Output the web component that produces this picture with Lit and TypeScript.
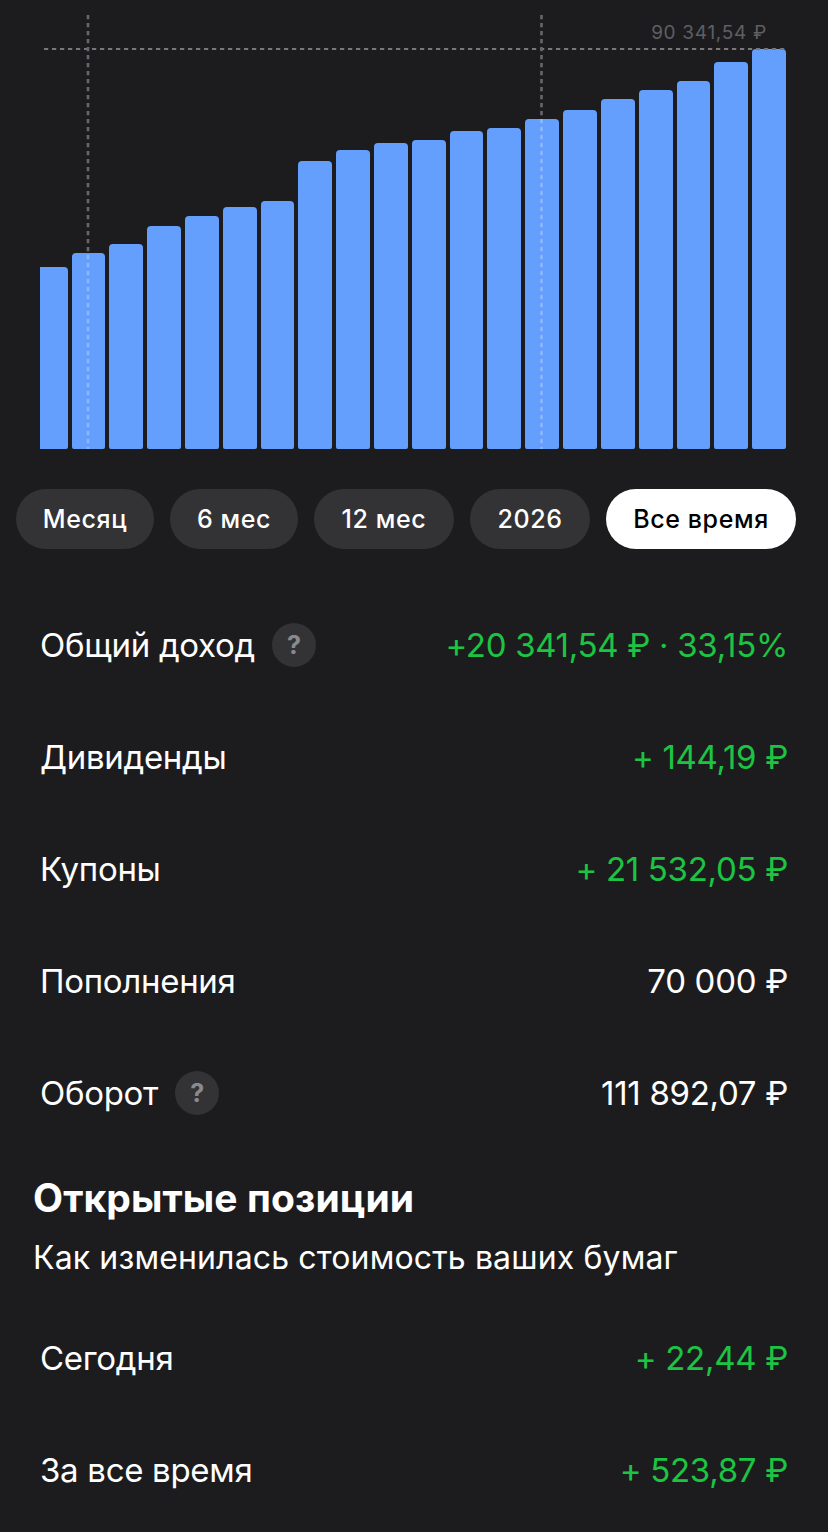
import { LitElement, html, css, svg } from "lit";
import { customElement } from "lit/decorators.js";

const TOPS = [267, 253, 243.5, 226, 216, 207, 201, 161, 150, 143, 140, 131, 128, 118.5, 110, 99, 90, 81, 62, 49];
const BASE = 449;
const PILLS = ["Месяц", "6 мес", "12 мес", "2026", "Все время"];

@customElement("app-root")
export class AppRoot extends LitElement {
  static styles = css`
    :host { display: block; width: 828px; height: 1532px; overflow: hidden; background: #1c1c1e; color: #fff;
      font-family: Inter, "Noto Sans", sans-serif; }
    .chart { position: relative; height: 449px; padding-left: 40px; width: 746px; }
    .bars { display: flex; align-items: flex-end; gap: 4px; height: 449px; width: 746px; }
    .bar { flex: 33.8 1 0; background: #659ffd; border-radius: 4px 4px 2px 2px; }
    .bar.first { flex: 27.5 1 0; border-radius: 0 4px 2px 0; }
    .overlay { position: absolute; left: 0; top: 0; width: 828px; height: 449px; pointer-events: none; }
    .peak { position: absolute; right: 19px; top: 21px; font-size: 19px; line-height: 24px; color: #5f5f62; letter-spacing: 0.7px; white-space: nowrap; }
    .pills { display: grid; grid-template-columns: 138px 128px 140px 120px 190px; gap: 16px; padding: 40px 0 0 16px; }
    .pill { height: 60px; display: flex; align-items: center; justify-content: center; border-radius: 30px; background: #333336;
      font-size: 25px; font-weight: 500; letter-spacing: 0.6px; white-space: nowrap; }
    .pill.on { background: #fff; color: #000; }
    .rows { padding: 40px 40px 0 40px; }
    .row { height: 112px; display: flex; align-items: center; justify-content: space-between; font-size: 33px; letter-spacing: -0.3px; white-space: nowrap; line-height: 40px; }
    .label { display: flex; align-items: center; gap: 17px; }
    .green { color: #1cc443; }
    .help { width: 44px; height: 44px; border-radius: 50%; background: #333336; color: #8a8a8e; font-size: 25px; font-weight: 700;
      display: flex; align-items: center; justify-content: center; letter-spacing: 0; }
    .section { padding: 27px 33px 0; }
    h2 { margin: 0; font-size: 39px; line-height: 44px; font-weight: 700; letter-spacing: 0.1px; }
    .sub { font-size: 32px; line-height: 40px; margin-top: 18px; letter-spacing: 0.14px; white-space: nowrap; }
    .rows.two { padding-top: 24px; }
  `;

  private row(label: string, value: string, green: boolean, help = false) {
    return html`<div class="row">
      <span class="label"><span>${label}</span>${help ? html`<span class="help">?</span>` : ""}</span>
      <span class=${green ? "green" : ""}>${value}</span>
    </div>`;
  }

  render() {
    return html`
      <div class="chart">
        <div class="bars">
          ${TOPS.map((t, i) => html`<div class="bar ${i === 0 ? "first" : ""}" style="height:${BASE - t}px"></div>`)}
        </div>
        <svg class="overlay" viewBox="0 0 828 449">
          ${svg`<g fill="none" stroke-dasharray="4.2 3.8">
            <line x1="44" y1="49" x2="786" y2="49" stroke="#77777b" stroke-width="2"></line>
            <g stroke="#68686c" stroke-width="2.6">
              <line x1="88" y1="15" x2="88" y2="253"></line>
              <line x1="541.5" y1="15" x2="541.5" y2="118"></line>
            </g>
            <g stroke="#8cb9ff" stroke-width="2.6">
              <line x1="88" y1="255" x2="88" y2="449"></line>
              <line x1="541.5" y1="119" x2="541.5" y2="449"></line>
            </g>
          </g>`}
        </svg>
        <div class="peak">90 341,54 ₽</div>
      </div>
      <div class="pills">
        ${PILLS.map((p, i) => html`<div class="pill ${i === 4 ? "on" : ""}">${p}</div>`)}
      </div>
      <div class="rows">
        ${this.row("Общий доход", "+20 341,54 ₽ · 33,15%", true, true)}
        ${this.row("Дивиденды", "+ 144,19 ₽", true)}
        ${this.row("Купоны", "+ 21 532,05 ₽", true)}
        ${this.row("Пополнения", "70 000 ₽", false)}
        ${this.row("Оборот", "111 892,07 ₽", false, true)}
      </div>
      <div class="section">
        <h2>Открытые позиции</h2>
        <div class="sub">Как изменилась стоимость ваших бумаг</div>
      </div>
      <div class="rows two">
        ${this.row("Сегодня", "+ 22,44 ₽", true)}
        ${this.row("За все время", "+ 523,87 ₽", true)}
      </div>
    `;
  }
}
